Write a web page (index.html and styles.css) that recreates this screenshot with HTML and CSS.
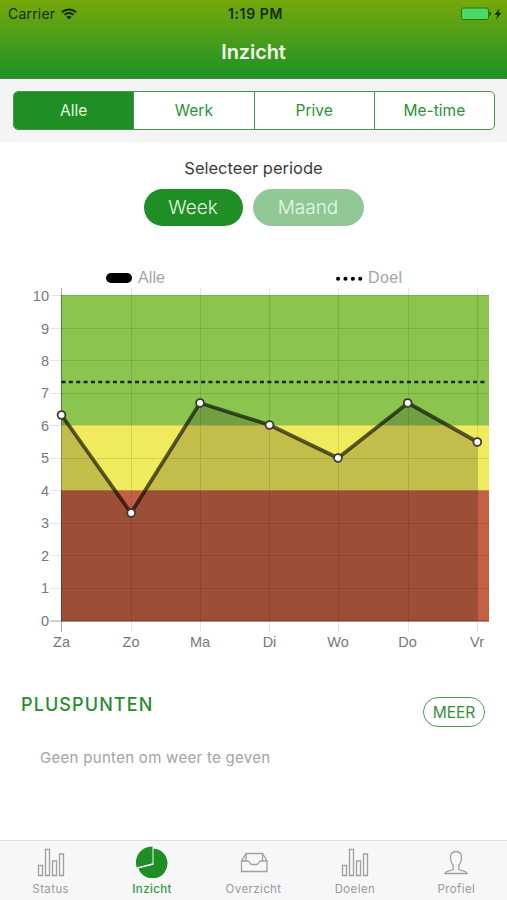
FILE: index.html
```
<!DOCTYPE html>
<html lang="nl">
<head>
  <meta charset="UTF-8">
  <meta name="viewport" content="width=device-width, initial-scale=1.0">
  <title>Inzicht</title>
  <link rel="stylesheet" href="styles.css">
</head>
<body>
  <div class="app">
    <header class="header">
      <div class="status-bar">
        <div class="carrier">
          <span>Carrier</span>
          <svg width="16" height="12" viewBox="0 0 16 12" fill="none" stroke="#132b05" stroke-width="1.9">
            <path d="M1 4.3a10 10 0 0 1 14 0M3.5 6.9a6.4 6.4 0 0 1 9 0"/>
            <path d="M8 11.6L5.4 8.900a3.800 3.800 0 0 1 5.200 0z" fill="#132b05" stroke="none"/>
          </svg>
        </div>
        <div class="clock">1:19 PM</div>
        <div class="battery">
          <svg width="42" height="14" viewBox="0 0 42 14">
            <rect x="0.5" y="1" width="27" height="11.5" rx="2" fill="#4cd964" stroke="#2b7518"/>
            <path d="M28.500 4.500a2.600 2.600 0 0 1 0 4.600z" fill="#163606"/>
            <path d="M38.500 1.500L33.500 7.700h2.900L35 12.400l5.500-6.600h-3z" fill="#132b05"/>
          </svg>
        </div>
      </div>
      <h1 class="title">Inzicht</h1>
    </header>

    <div class="segment-bar">
      <div class="segments">
        <button class="segment active">Alle</button>
        <button class="segment">Werk</button>
        <button class="segment">Prive</button>
        <button class="segment">Me-time</button>
      </div>
    </div>

    <main class="content">
      <p class="period-label">Selecteer periode</p>
      <div class="period-buttons">
        <button class="pill week">Week</button>
        <button class="pill month">Maand</button>
      </div>

      <svg class="chart" width="507" height="400" viewBox="0 260 507 400">
        <!-- legenda -->
        <rect x="106" y="273" width="26" height="10" rx="5" fill="#000"/>
        <text class="legend" x="138" y="283" textLength="27">Alle</text>
        <path d="M338 278.700h25" stroke="#000" stroke-width="4" stroke-linecap="round" stroke-dasharray="0.1 7.300"/>
        <text class="legend" x="368" y="283" textLength="34">Doel</text>

        <!-- zones -->
        <rect x="61" y="295" width="428" height="130.5" fill="#8bc550"/>
        <rect x="61" y="425" width="428" height="66" fill="#f0ea5d"/>
        <rect x="61" y="490.5" width="428" height="131" fill="#c26044"/>

        <!-- raster -->
        <path class="grid" d="M50 295.5h439M50 328.5h439M50 360.5h439M50 393.5h439M50 425.5h439M50 458.5h439M50 490.5h439M50 523.5h439M50 555.5h439M50 588.5h439"/>
        <path class="grid" d="M131.5 288v344M200.5 288v344M269.5 288v344M338.5 288v344M408.5 288v344M477.5 288v344"/>
        <path class="axis" d="M61.5 288v344M50 621h439"/>

        <path d="M61.5 382H485" stroke="#000" stroke-opacity=".82" stroke-width="2.6" stroke-dasharray="4 3.35"/>

        <path d="M61.5 415L131 513L200 403L269.5 425L338 458L408 403L477.5 442V621H61.5z" fill="#000" fill-opacity=".19"/>
        <path d="M61.5 415L131 513L200 403L269.5 425L338 458L408 403L477.5 442" fill="none" stroke="#000" stroke-opacity=".62" stroke-width="3.8" stroke-linejoin="round"/>
        <g class="points">
          <circle cx="61.5" cy="415" r="3.9"/>
          <circle cx="131.2" cy="513" r="3.9"/>
          <circle cx="200" cy="403" r="3.9"/>
          <circle cx="269.5" cy="425" r="3.9"/>
          <circle cx="338" cy="458" r="3.9"/>
          <circle cx="407.7" cy="403" r="3.9"/>
          <circle cx="477.3" cy="442" r="3.9"/>
        </g>

        <g class="ticks-y">
          <text x="49" y="300.5">10</text>
          <text x="49" y="333.5">9</text>
          <text x="49" y="365.5">8</text>
          <text x="49" y="398">7</text>
          <text x="49" y="430.5">6</text>
          <text x="49" y="463">5</text>
          <text x="49" y="495.5">4</text>
          <text x="49" y="528">3</text>
          <text x="49" y="560.5">2</text>
          <text x="49" y="592.5">1</text>
          <text x="49" y="625.5">0</text>
        </g>
        <g class="ticks-x">
          <text x="61.5" y="647">Za</text>
          <text x="131" y="647">Zo</text>
          <text x="200" y="647">Ma</text>
          <text x="269.5" y="647">Di</text>
          <text x="338" y="647">Wo</text>
          <text x="407.5" y="647">Do</text>
          <text x="477" y="647">Vr</text>
        </g>
      </svg>

      <section class="points-section">
        <div class="section-head">
          <h2>PLUSPUNTEN</h2>
          <button class="more">MEER</button>
        </div>
        <p class="empty">Geen punten om weer te geven</p>
      </section>
    </main>

    <nav class="tabs">
      <a class="tab">
        <svg width="36" height="34" viewBox="0 0 36 34">
          <path d="M5.5 21.5h4v10h-4zM12.5 5.5h4v26h-4zM19.5 17h4v14.5h-4zM26.5 10h4v21.5h-4z"/>
        </svg>
        <span>Status</span>
      </a>
      <a class="tab active">
        <svg width="36" height="34" viewBox="0 0 36 34">
          <path class="solid" d="M19.5 4.5A15 15 0 1 1 4.4 24.6L19.5 20.7z"/>
          <path class="solid" d="M18.500 2.500V19.200L2.700 23.400A16 16 0 0 1 18.500 2.500z"/>
        </svg>
        <span>Inzicht</span>
      </a>
      <a class="tab">
        <svg width="36" height="34" viewBox="0 0 36 34">
          <path d="M10 16.500V9.500h16.500v7M10 9.500L5.500 17v10.500H31V17L26.500 9.500M5.500 17H12c1.500 0 2 3.500 4 3.500h4.500c2 0 2.500-3.500 4-3.500H31"/>
        </svg>
        <span>Overzicht</span>
      </a>
      <a class="tab">
        <svg width="36" height="34" viewBox="0 0 36 34">
          <path d="M5.5 21.5h4v10h-4zM12.5 5.5h4v26h-4zM19.5 17h4v14.5h-4zM26.5 10h4v21.5h-4z"/>
        </svg>
        <span>Doelen</span>
      </a>
      <a class="tab">
        <svg width="36" height="34" viewBox="0 0 36 34">
          <path d="M18 7.500c-3.800 0-5.700 2.500-5.500 6.500.2 3.500 1 5.500 2.700 7.500v3.500c0 2-8 1.500-8.200 4.500h22c-.2-3-8.200-2.500-8.200-4.500v-3.500c1.700-2 2.500-4 2.700-7.500.2-4-1.700-6.500-5.500-6.500z"/>
        </svg>
        <span>Profiel</span>
      </a>
    </nav>
  </div>
</body>
</html>
```
FILE: styles.css
```
* {
  box-sizing: border-box;
}

body {
  margin: 0;
  font-family: Inter, "Liberation Sans", sans-serif;
  background-color: #fff;
}

button {
  font-family: inherit;
  padding: 0;
  margin: 0;
}

.app {
  display: flex;
  flex-direction: column;
  width: 507px;
  height: 900px;
  overflow: hidden;
}

.header {
  height: 79px;
  background: linear-gradient(#76a90b, #1d9127);
  border-bottom: 1px solid #3a8a3c;
}

.status-bar {
  display: grid;
  grid-template-columns: 1fr auto 1fr;
  align-items: center;
  height: 27px;
  padding: 0 4px 0 8px;
  font-size: 14px;
  color: #132b05;
}

.carrier {
  display: flex;
  align-items: center;
  gap: 6px;
  letter-spacing: 0.2px;
}

.clock {
  font-weight: 600;
  font-size: 14px;
  letter-spacing: 0.6px;
}

.battery {
  display: flex;
  justify-content: flex-end;
}

.title {
  margin: 0;
  padding-top: 12px;
  font-size: 20px;
  line-height: 26px;
  font-weight: 600;
  letter-spacing: -0.1px;
  text-align: center;
  color: #f3f8e6;
}

.segment-bar {
  height: 63px;
  padding: 12px 12px 0 13px;
  background-color: #f4f4f4;
}

.segments {
  display: flex;
  height: 39px;
  border: 1px solid #3f9a4a;
  border-radius: 5px;
  background-color: #fff;
  overflow: hidden;
}

.segment {
  flex: 1;
  border: none;
  border-left: 1px solid #3f9a4a;
  background: none;
  font-size: 15.5px;
  color: #2b9236;
}

.segment:first-child {
  border-left: none;
}

.segment.active {
  background-color: #1f8e25;
  color: #e3f5e0;
}

.period-label {
  margin: 0;
  padding-top: 16px;
  font-size: 16.5px;
  line-height: 21px;
  text-align: center;
  color: #3c3c3c;
}

.period-buttons {
  display: flex;
  justify-content: center;
  gap: 10px;
  padding-top: 10px;
}

.pill {
  height: 37px;
  border: none;
  border-radius: 19px;
  font-size: 19px;
  font-weight: 300;
  color: #e6f7e4;
}

.pill.week {
  width: 99px;
  background-color: #1f8e25;
}

.pill.month {
  width: 111px;
  background-color: #90c895;
  border: 1px solid #9cc3a0;
}

.chart {
  display: block;
  margin-top: 34px;
  font-family: "Liberation Sans", Arial, sans-serif;
}

.legend {
  font-size: 16px;
  fill: #a4a4a4;
}

.grid {
  stroke: rgba(0, 0, 0, 0.1);
}

.axis {
  stroke: rgba(0, 0, 0, 0.35);
}

.points circle {
  fill: #fff;
  stroke: #3b3b33;
  stroke-width: 1.8;
}

.ticks-y,
.ticks-x {
  font-size: 14.5px;
  fill: #777;
}

.ticks-y {
  text-anchor: end;
}

.ticks-x {
  text-anchor: middle;
}

.content {
  flex: 1;
}

.points-section {
  padding: 33px 22px 0 21px;
}

.section-head {
  display: flex;
  justify-content: space-between;
}

.section-head h2 {
  margin: 0;
  font-size: 18px;
  line-height: 24px;
  font-weight: 500;
  letter-spacing: 1.1px;
  color: #2a8c30;
}

.more {
  width: 62px;
  height: 30px;
  margin-top: 4px;
  border: 1.5px solid #4b9b55;
  border-radius: 15px;
  background: none;
  font-size: 15.5px;
  color: #33903c;
}

.empty {
  margin: 0;
  padding: 21px 0 0 19px;
  font-size: 15px;
  line-height: 20px;
  letter-spacing: 0.3px;
  color: #a3a3a3;
}

.tabs {
  display: flex;
  height: 60px;
  border-top: 1px solid #dcdcdc;
  background-color: #f7f7f7;
}

.tab {
  flex: 1;
  display: flex;
  flex-direction: column;
  align-items: center;
  padding-top: 3px;
  font-size: 11.5px;
  line-height: 14px;
  letter-spacing: 0.4px;
  color: #999;
}

.tab svg {
  margin-bottom: 4px;
  fill: none;
  stroke: #a0a0a0;
  stroke-width: 1.3;
}

.tab.active {
  color: #2f9a38;
  font-weight: 500;
}

.tab .solid {
  fill: #1f8e25;
  stroke: none;
}
```
